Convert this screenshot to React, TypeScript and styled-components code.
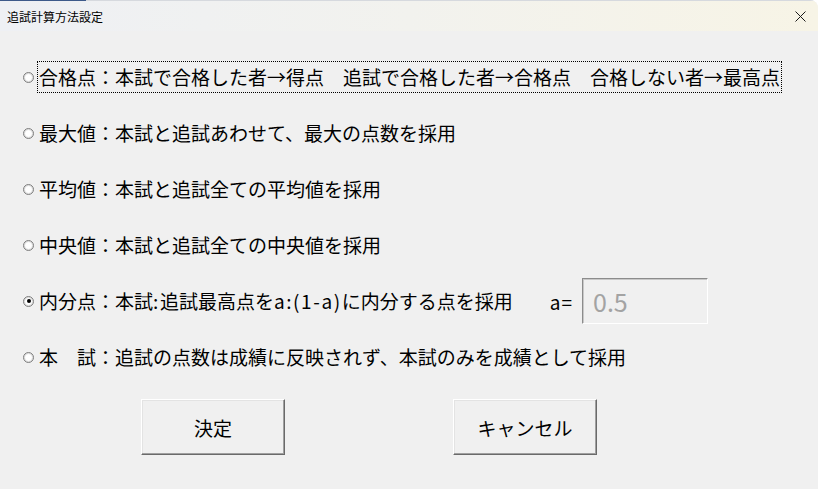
import { createGlobalStyle, styled } from 'styled-components';

const GlobalStyle = createGlobalStyle`
  html, body {
    margin: 0;
    padding: 0;
    background: #ffffff;
  }
  body {
    font-family: "Noto Sans CJK JP", "Noto Sans", sans-serif;
    color: #000;
  }
`;

const Window = styled.div`
  width: 818px;
  height: 489px;
  background: #f0f0f0;
  display: flex;
  flex-direction: column;
  overflow: hidden;
  border-top-right-radius: 8px;
`;

const TitleBar = styled.div`
  height: 31px;
  flex: none;
  display: flex;
  align-items: center;
  justify-content: space-between;
  padding: 0 12px 0 7px;
  background: linear-gradient(90deg, #eef0f4 0%, #f2f2ee 50%, #f7f4e6 100%);
  border-top: 1px solid #d6d9de;
  box-sizing: border-box;
  position: relative;
  &::before {
    content: '';
    position: absolute;
    left: 0;
    top: -1px;
    width: 86px;
    height: 1px;
    background: #3d5a8a;
  }
`;

const Title = styled.span`
  font-size: 12px;
  line-height: 1;
  margin-top: 1px;
`;

const CloseIcon = styled.svg`
  width: 11px;
  height: 11px;
  display: block;
`;

const Body = styled.div`
  padding: 18px 0 0 23px;
  display: flex;
  flex-direction: column;
`;

const OptionRow = styled.div`
  height: 56px;
  display: flex;
  align-items: center;
  font-size: 19px;
  line-height: 1;
`;

const Radio = styled.span<{ $checked?: boolean }>`
  width: 11px;
  height: 11px;
  box-sizing: border-box;
  flex: none;
  border-radius: 50%;
  border: 1px solid #7e7e7e;
  box-shadow: inset 0 0 0 1px #dcdcdc;
  background: radial-gradient(circle at 50% 50%, #ffffff 0%, #ffffff 40%, #e6e6e6 100%);
  margin-right: 3px;
  display: flex;
  align-items: center;
  justify-content: center;
  &::after {
    content: '';
    width: 4px;
    height: 4px;
    border-radius: 50%;
    background: ${props => (props.$checked ? '#000' : 'transparent')};
  }
`;

const Label = styled.span<{ $focused?: boolean }>`
  padding: 5px 1px 6px;
  border: 1px dotted ${props => (props.$focused ? '#000' : 'transparent')};
  white-space: pre;
`;

const Latin = styled.span`
  letter-spacing: 1.6px;
`;

const ParamLabel = styled.span`
  margin-left: 35px;
  margin-right: 9px;
  white-space: pre;
  letter-spacing: 1px;
`;

const ParamInput = styled.div`
  width: 126px;
  height: 46px;
  box-sizing: border-box;
  border: 1px solid;
  border-color: #8c8c8c #ffffff #ffffff #8c8c8c;
  box-shadow: inset 1px 1px 0 #c8c8c8;
  background: #f0f0f0;
  color: #a3a3a3;
  font-size: 25px;
  display: flex;
  align-items: center;
  padding-left: 10px;
`;

const ButtonRow = styled.div`
  display: flex;
  gap: 168px;
  padding: 14px 0 0 141px;
`;

const Button = styled.button`
  width: 144px;
  height: 56px;
  box-sizing: border-box;
  background: #f0f0f0;
  font-family: inherit;
  font-size: 19px;
  color: #000;
  border: 1px solid;
  border-color: #ffffff #6a6a6a #6a6a6a #ffffff;
  box-shadow: inset -1px -1px 0 #a0a0a0, inset 1px 1px 0 #e3e3e3;
  padding: 0;
`;

function App() {
  return (
    <Window>
      <GlobalStyle />
      <TitleBar>
        <Title>追試計算方法設定</Title>
        <CloseIcon viewBox="0 0 11 11">
          <path d="M0.5 0.5 L10.5 10.5 M10.5 0.5 L0.5 10.5" stroke="#1a1a1a" strokeWidth="1" fill="none" />
        </CloseIcon>
      </TitleBar>
      <Body>
        <OptionRow>
          <Radio />
          <Label $focused>合格点：本試で合格した者→得点　追試で合格した者→合格点　合格しない者→最高点</Label>
        </OptionRow>
        <OptionRow>
          <Radio />
          <Label>最大値：本試と追試あわせて、最大の点数を採用</Label>
        </OptionRow>
        <OptionRow>
          <Radio />
          <Label>平均値：本試と追試全ての平均値を採用</Label>
        </OptionRow>
        <OptionRow>
          <Radio />
          <Label>中央値：本試と追試全ての中央値を採用</Label>
        </OptionRow>
        <OptionRow>
          <Radio $checked />
          <Label>内分点：本試<Latin>:</Latin>追試最高点を<Latin>a:(1-a)</Latin>に内分する点を採用</Label>
          <ParamLabel>a=</ParamLabel>
          <ParamInput>0.5</ParamInput>
        </OptionRow>
        <OptionRow>
          <Radio />
          <Label>本　試：追試の点数は成績に反映されず、本試のみを成績として採用</Label>
        </OptionRow>
      </Body>
      <ButtonRow>
        <Button>決定</Button>
        <Button>キャンセル</Button>
      </ButtonRow>
    </Window>
  );
}

export default App;
